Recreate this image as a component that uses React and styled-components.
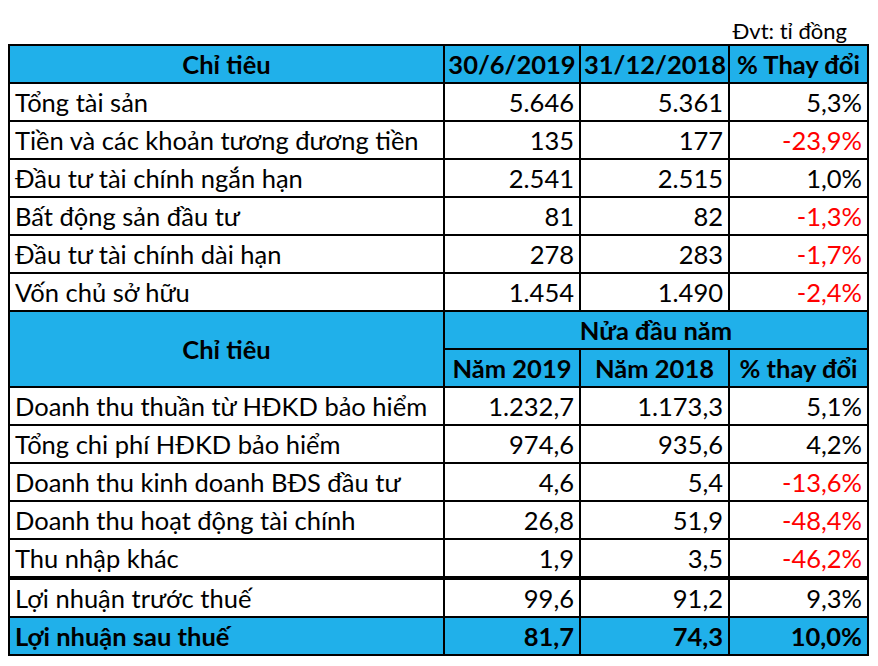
import React from "react";
import styled, { createGlobalStyle } from "styled-components";

const Global = createGlobalStyle`
  body {
    margin: 0;
    background: #fff;
    font-family: Lato, "Open Sans", sans-serif;
  }
`;

const Page = styled.div`
  padding: 18px 0 0 8px;
  width: 862px;
`;

const Unit = styled.div`
  text-align: right;
  font-size: 22px;
  line-height: 26px;
  padding-right: 23px;
  height: 26px;
  color: #000;
`;

const Table = styled.table`
  border-collapse: collapse;
  table-layout: fixed;
  width: 861px;
  font-size: 25.5px;
  color: #000;
  border: 2px solid #000;
`;

const Cell = styled.td`
  border: 2px solid #000;
  height: 36px;
  padding: 0 5px;
  line-height: 36px;
  white-space: nowrap;
  text-align: ${(p) => (p.$num ? "right" : "left")};
  color: ${(p) => (p.$neg ? "#ff0000" : "#000")};
  font-weight: ${(p) => (p.$bold ? 700 : 400)};
  background: ${(p) => (p.$blue ? "#20b0ea" : "#fff")};
`;

const Head = styled.th`
  border: 2px solid #000;
  height: 36px;
  padding: 0 3px;
  line-height: 36px;
  white-space: nowrap;
  text-align: center;
  font-weight: 700;
  background: #20b0ea;
`;

const Row = styled.tr`
  border-top: ${(p) => (p.$thick ? "4px solid #000" : "none")};
`;

const balance = [
  ["Tổng tài sản", "5.646", "5.361", "5,3%"],
  ["Tiền và các khoản tương đương tiền", "135", "177", "-23,9%"],
  ["Đầu tư tài chính ngắn hạn", "2.541", "2.515", "1,0%"],
  ["Bất động sản đầu tư", "81", "82", "-1,3%"],
  ["Đầu tư tài chính dài hạn", "278", "283", "-1,7%"],
  ["Vốn chủ sở hữu", "1.454", "1.490", "-2,4%"],
];

const income = [
  ["Doanh thu thuần từ HĐKD bảo hiểm", "1.232,7", "1.173,3", "5,1%"],
  ["Tổng chi phí HĐKD bảo hiểm", "974,6", "935,6", "4,2%"],
  ["Doanh thu kinh doanh BĐS đầu tư", "4,6", "5,4", "-13,6%"],
  ["Doanh thu hoạt động tài chính", "26,8", "51,9", "-48,4%"],
  ["Thu nhập khác", "1,9", "3,5", "-46,2%"],
];

const DataRow = ({ item, thick, total }) => (
  <Row $thick={thick}>
    <Cell $bold={total} $blue={total}>{item[0]}</Cell>
    <Cell $num $bold={total} $blue={total}>{item[1]}</Cell>
    <Cell $num $bold={total} $blue={total}>{item[2]}</Cell>
    <Cell $num $bold={total} $blue={total} $neg={item[3].startsWith("-")}>
      {item[3]}
    </Cell>
  </Row>
);

export default function App() {
  return (
    <Page>
      <Global />
      <Unit>Đvt: tỉ đồng</Unit>
      <Table>
        <colgroup>
          <col style={{ width: 435 }} />
          <col style={{ width: 136 }} />
          <col style={{ width: 149 }} />
          <col style={{ width: 139 }} />
        </colgroup>
        <tbody>
          <tr>
            <Head>Chỉ tiêu</Head>
            <Head>30/6/2019</Head>
            <Head>31/12/2018</Head>
            <Head>% Thay đổi</Head>
          </tr>
          {balance.map((item) => (
            <DataRow key={item[0]} item={item} />
          ))}
          <tr>
            <Head rowSpan={2}>Chỉ tiêu</Head>
            <Head colSpan={3}>Nửa đầu năm</Head>
          </tr>
          <tr>
            <Head>Năm 2019</Head>
            <Head>Năm 2018</Head>
            <Head>% thay đổi</Head>
          </tr>
          {income.map((item) => (
            <DataRow key={item[0]} item={item} />
          ))}
          <DataRow thick item={["Lợi nhuận trước thuế", "99,6", "91,2", "9,3%"]} />
          <DataRow total item={["Lợi nhuận sau thuế", "81,7", "74,3", "10,0%"]} />
        </tbody>
      </Table>
    </Page>
  );
}
